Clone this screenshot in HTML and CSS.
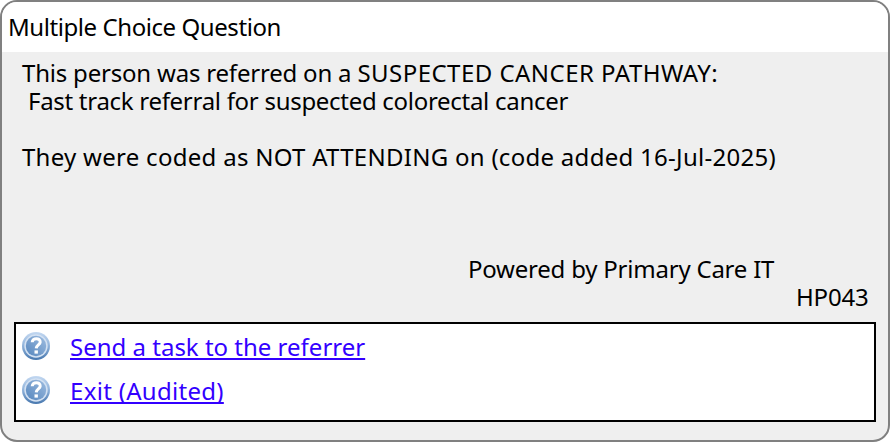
FILE: index.html
```html
<!DOCTYPE html>
<html lang="en">
<head>
    <meta charset="UTF-8">
    <meta name="viewport" content="width=device-width, initial-scale=1.0">
    <title>Multiple Choice Question</title>
    <link rel="stylesheet" href="styles.css">
</head>
<body>
    <!-- question mark icon shared by the options -->
    <svg width="0" height="0" class="icon-defs">
        <defs>
            <linearGradient id="ring" x1="0" y1="0" x2="0" y2="1">
                <stop offset="0" stop-color="#c3d8f1"/>
                <stop offset="0.5" stop-color="#8fb2da"/>
                <stop offset="1" stop-color="#4777ae"/>
            </linearGradient>
            <linearGradient id="disc" x1="1" y1="0" x2="0" y2="1">
                <stop offset="0" stop-color="#9dbce0"/>
                <stop offset="1" stop-color="#5686bd"/>
            </linearGradient>
            <symbol id="help" viewBox="0 0 28 28">
                <circle cx="14" cy="14" r="14" fill="url(#ring)"/>
                <circle cx="14" cy="14" r="11.7" fill="#d3e1f2"/>
                <circle cx="14" cy="14" r="10.2" fill="url(#disc)"/>
                <path d="M10.2 10.2C10.4 5.4 18.4 5.5 18.2 10.1C18.1 12.9 14.3 12.9 14.2 16.4" fill="none" stroke="#fff" stroke-width="3"/>
                <rect x="12.5" y="18.4" width="3.4" height="3.2" fill="#fff"/>
            </symbol>
        </defs>
    </svg>

    <div class="window">
        <div class="title-bar"><span class="title">Multiple Choice Question</span></div>
        <div class="message">
            <p class="line referred">This person was referred on a <span class="pathway">SUSPECTED CANCER PATHWAY:</span></p>
            <p class="line reason">Fast track referral for suspected colorectal cancer</p>
            <p class="line coded">They were coded as NOT ATTENDING on (code added 16-Jul-2025)</p>
            <p class="line powered">Powered by Primary Care IT</p>
            <p class="line code">HP043</p>
        </div>
        <div class="options">
            <div class="option">
                <svg class="icon"><use href="#help"/></svg>
                <a href="#" class="send">Send a task to the referrer</a>
            </div>
            <div class="option">
                <svg class="icon"><use href="#help"/></svg>
                <a href="#" class="exit">Exit (Audited)</a>
            </div>
        </div>
    </div>
</body>
</html>
```

FILE: styles.css
```css
* {
    box-sizing: border-box;
}
body {
    margin: 0;
    background-color: white;
    font-family: "Noto Sans", sans-serif;
    font-size: 24px;
    color: black;
}
.icon-defs {
    display: block;
}
.window {
    width: 890px;
    height: 442px;
    border: 2px solid #808080;
    border-radius: 17px;
    background-color: #efefef;
    overflow: hidden;
}
.title-bar {
    height: 50px;
    padding-left: 6px;
    background-color: white;
    line-height: 50px;
    letter-spacing: -0.43px;
}
.message {
    height: 270px;
    padding: 7px 20px 0;
}
.line {
    margin: 0;
    line-height: 28px;
    white-space: pre;
}
.referred {
    letter-spacing: -0.2px;
}
.pathway {
    letter-spacing: 0.46px;
}
.reason {
    padding-left: 6px;
    letter-spacing: -0.29px;
}
.coded {
    margin-top: 28px;
    letter-spacing: 0.28px;
}
.powered {
    margin-top: 84px;
    padding-left: 446px;
    letter-spacing: -0.22px;
}
.code {
    padding-left: 774px;
    letter-spacing: -0.2px;
}
.options {
    width: 862px;
    height: 100px;
    margin-left: 12px;
    padding: 0 6px;
    border: 2px solid black;
    background-color: white;
}
.option {
    display: flex;
    align-items: center;
    gap: 20px;
    height: 44px;
}
.icon {
    width: 28px;
    height: 28px;
}
.option a {
    padding-top: 2px;
    color: #3300ff;
    line-height: 28px;
    text-decoration-thickness: 2px;
    text-underline-offset: 2px;
    text-decoration-skip-ink: none;
}
.exit {
    letter-spacing: 0.3px;
}
```
